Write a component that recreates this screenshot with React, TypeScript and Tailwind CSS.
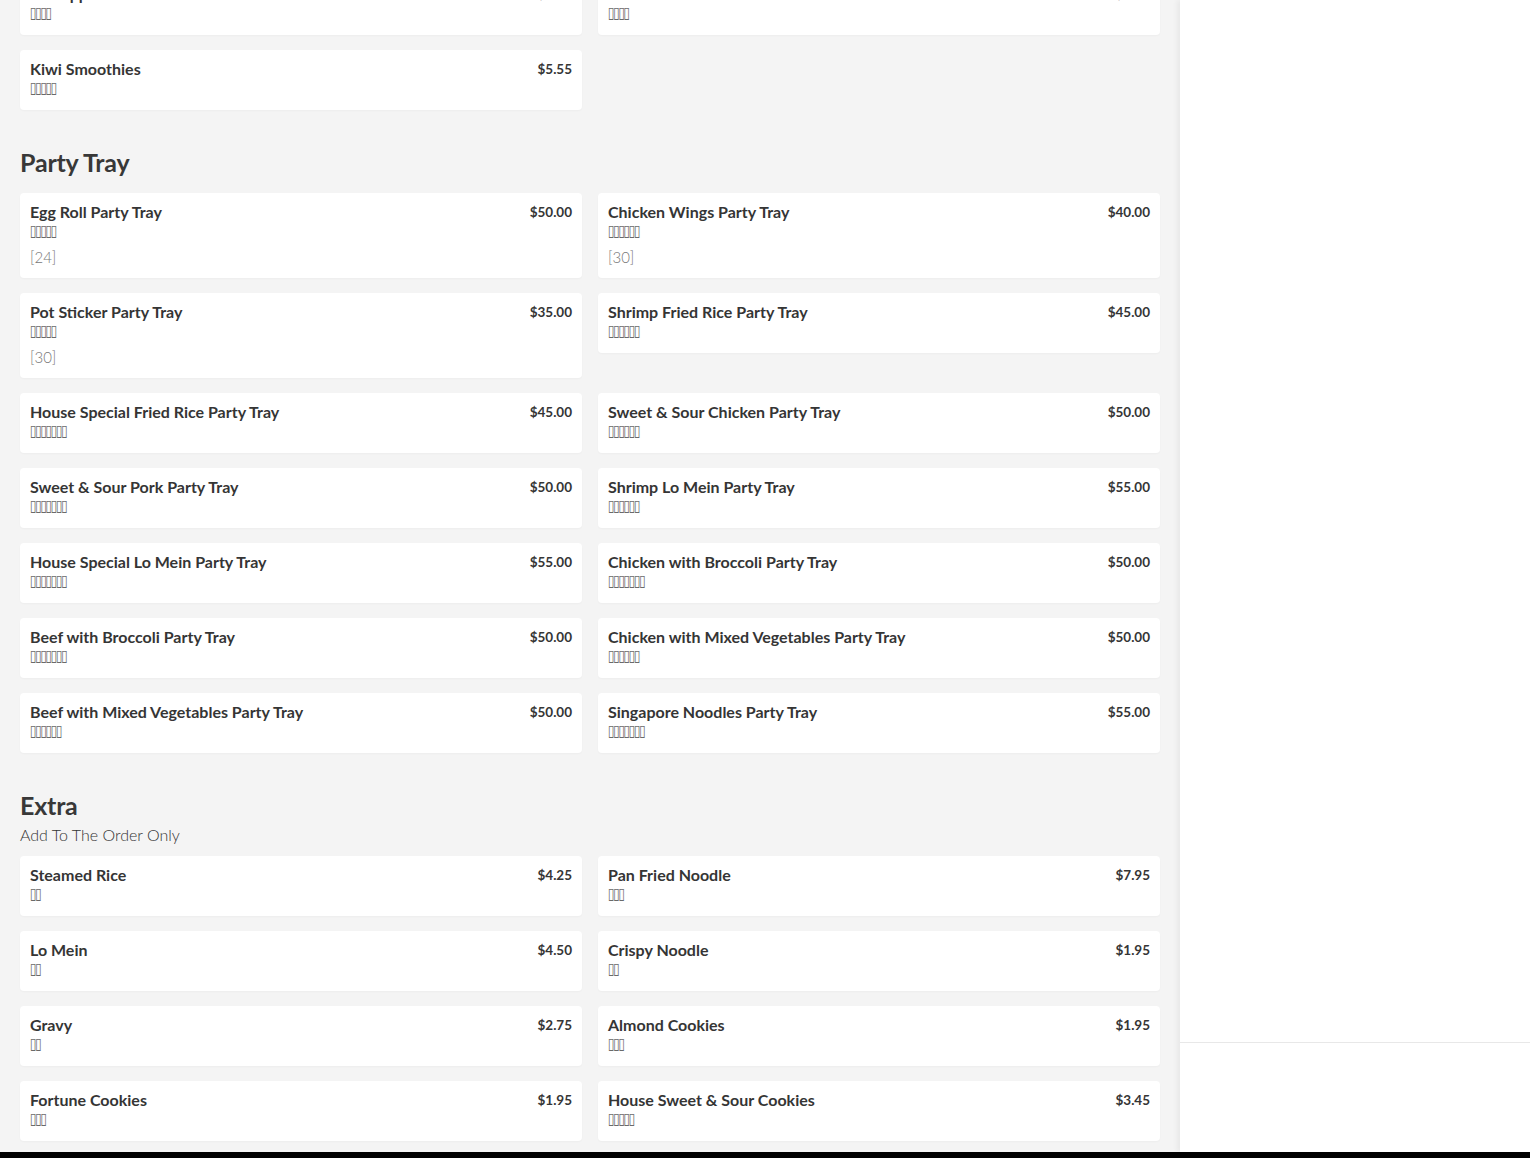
import * as React from "react";

type Item = { name: string; zh: number; price: string; note?: string };

const smoothies: Item[] = [
  { name: "Pineapple Smoothies", zh: 4, price: "$5.55" },
  { name: "Coconut Smoothies", zh: 4, price: "$5.55" },
  { name: "Kiwi Smoothies", zh: 5, price: "$5.55" },
];

const partyTray: Item[] = [
  { name: "Egg Roll Party Tray", zh: 5, price: "$50.00", note: "[24]" },
  { name: "Chicken Wings Party Tray", zh: 6, price: "$40.00", note: "[30]" },
  { name: "Pot Sticker Party Tray", zh: 5, price: "$35.00", note: "[30]" },
  { name: "Shrimp Fried Rice Party Tray", zh: 6, price: "$45.00" },
  { name: "House Special Fried Rice Party Tray", zh: 7, price: "$45.00" },
  { name: "Sweet & Sour Chicken Party Tray", zh: 6, price: "$50.00" },
  { name: "Sweet & Sour Pork Party Tray", zh: 7, price: "$50.00" },
  { name: "Shrimp Lo Mein Party Tray", zh: 6, price: "$55.00" },
  { name: "House Special Lo Mein Party Tray", zh: 7, price: "$55.00" },
  { name: "Chicken with Broccoli Party Tray", zh: 7, price: "$50.00" },
  { name: "Beef with Broccoli Party Tray", zh: 7, price: "$50.00" },
  { name: "Chicken with Mixed Vegetables Party Tray", zh: 6, price: "$50.00" },
  { name: "Beef with Mixed Vegetables Party Tray", zh: 6, price: "$50.00" },
  { name: "Singapore Noodles Party Tray", zh: 7, price: "$55.00" },
];

const extra: Item[] = [
  { name: "Steamed Rice", zh: 2, price: "$4.25" },
  { name: "Pan Fried Noodle", zh: 3, price: "$7.95" },
  { name: "Lo Mein", zh: 2, price: "$4.50" },
  { name: "Crispy Noodle", zh: 2, price: "$1.95" },
  { name: "Gravy", zh: 2, price: "$2.75" },
  { name: "Almond Cookies", zh: 3, price: "$1.95" },
  { name: "Fortune Cookies", zh: 3, price: "$1.95" },
  { name: "House Sweet & Sour Cookies", zh: 5, price: "$3.45" },
];

export default function App() {
  return (
    <div className="flex h-[1158px] w-[1530px] flex-col overflow-hidden bg-[#f4f4f4] font-['Lato',sans-serif] text-[#353535]">
      <div className="flex h-[1152px]">
        {/* Menu */}
        <main className="w-[1180px] shrink-0 overflow-hidden px-5">
          <div className="-mt-[25px]">
            <MenuGrid items={smoothies} />

            <h2 className="mt-[37px] mb-4 text-[25px] leading-[30px] font-bold tracking-[-0.2px] text-[#383838]">
              Party Tray
            </h2>
            <MenuGrid items={partyTray} />

            <h2 className="mt-[37px] text-[25px] leading-[30px] font-bold tracking-[-0.2px] text-[#383838]">
              Extra
            </h2>
            <p className="mt-1 mb-[10px] text-[16px] leading-[22px] font-light text-[#333]">
              Add To The Order Only
            </p>
            <MenuGrid items={extra} />
          </div>
        </main>

        {/* Cart panel */}
        <aside className="flex w-[350px] shrink-0 flex-col bg-white shadow-[-3px_0_5px_rgba(0,0,0,0.05)]">
          <div className="flex-1" />
          <div className="h-[110px] border-t border-[#e8e8e8]" />
        </aside>
      </div>
      <div className="h-[6px] bg-black" />
    </div>
  );
}

function MenuGrid({ items }: { items: Item[] }) {
  return (
    <div className="grid grid-cols-2 items-start gap-x-4 gap-y-[15px]">
      {items.map((item) => (
        <MenuCard key={item.name} item={item} />
      ))}
    </div>
  );
}

function MenuCard({ item }: { item: Item }) {
  return (
    <div className="flex justify-between gap-4 rounded-[4px] bg-white px-[10px] pt-[9px] pb-[11px] shadow-[0_1px_2px_rgba(0,0,0,0.03)]">
      <div className="min-w-0">
        <div className="text-[16px] leading-[20px] font-bold text-[#353535]">{item.name}</div>
        <div className="h-[20px] leading-[20px]">
          <span className="inline-block origin-center -translate-y-[3px] scale-y-[1.3] font-['DejaVu_Sans',sans-serif] text-[12px] tracking-[-1.4px] text-[#6a6a6a]">
            {"▯".repeat(item.zh)}
          </span>
        </div>
        {item.note && (
          <div className="mt-[6px] text-[15px] leading-[19px] font-light text-[#777]">{item.note}</div>
        )}
      </div>
      <div className="text-[13.5px] leading-[20px] font-bold text-[#353535]">{item.price}</div>
    </div>
  );
}
